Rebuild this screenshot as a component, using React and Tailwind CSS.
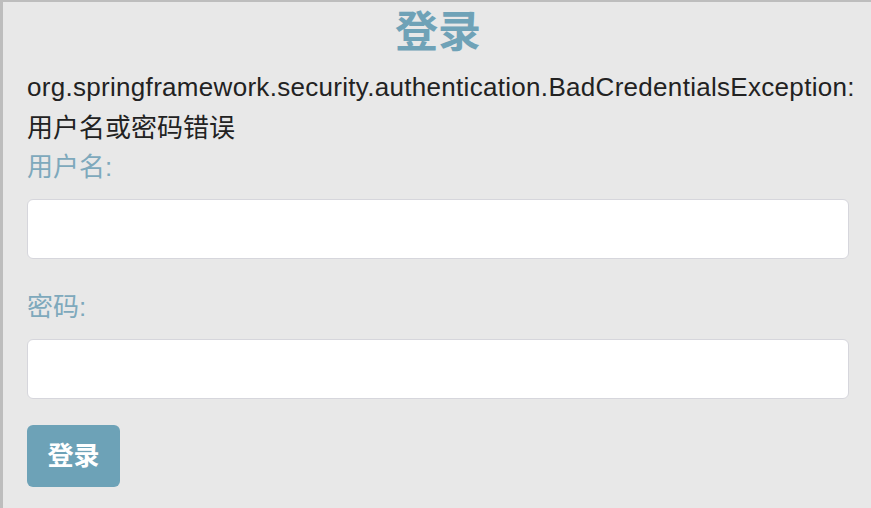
export default function App() {
  return (
    <div
      className="min-h-[508px] w-[871px] border-l-[3px] border-t-2 border-[#bdbdbd] bg-[#e8e8e8] pl-6 pr-[22px] text-[#222]"
      style={{ fontFamily: '"Liberation Sans", "Noto Sans CJK SC", sans-serif' }}
    >
      <h1 className="text-center text-[43px] font-bold leading-[60px] text-[#6fa2b7]">登录</h1>

      <p className="mt-[5px] text-[26px] leading-[41px]">
        <span className="tracking-[0.3px]">
          org.springframework.security.authentication.BadCredentialsException:
        </span>
        <br />
        用户名或密码错误
      </p>

      <form className="flex flex-col">
        <label className="text-[26px] leading-[36px] text-[#7ea9bc]">用户名:</label>
        <input
          type="text"
          className="mt-[14px] h-[60px] w-full rounded-md border border-[#d6d6dc] bg-white px-3 outline-none"
        />

        <label className="mt-[30px] text-[26px] leading-[36px] text-[#7ea9bc]">密码:</label>
        <input
          type="password"
          className="mt-[14px] h-[60px] w-full rounded-md border border-[#d6d6dc] bg-white px-3 outline-none"
        />

        <div className="mt-[26px]">
          <button
            type="button"
            className="h-[62px] w-[93px] rounded-md bg-[#6da2b7] text-[26px] font-bold text-white"
          >
            登录
          </button>
        </div>
      </form>
    </div>
  );
}
